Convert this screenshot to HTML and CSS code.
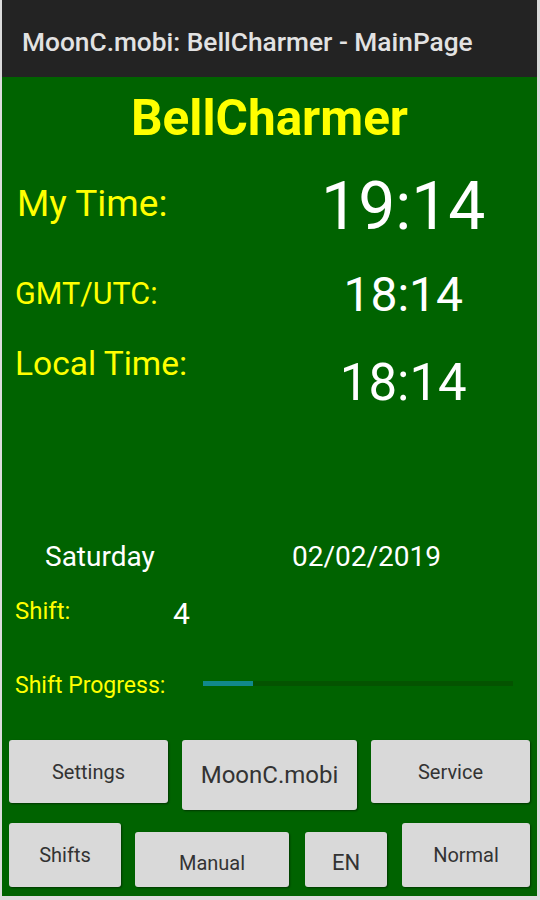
FILE: index.html
```html
<!DOCTYPE html>
<html lang="en">
<head>
    <meta charset="UTF-8">
    <meta name="viewport" content="width=device-width, initial-scale=1.0">
    <title>BellCharmer - MainPage</title>
    <link rel="stylesheet" href="styles.css">
</head>
<body>
  <div class="app">
    <div class="titlebar">MoonC.mobi: BellCharmer - MainPage</div>
    <div class="main">
      <h1 class="app-name">BellCharmer</h1>

      <div class="time-row row-my">
        <span class="label">My Time:</span>
        <span class="value">19:14</span>
      </div>
      <div class="time-row row-gmt">
        <span class="label">GMT/UTC:</span>
        <span class="value">18:14</span>
      </div>
      <div class="time-row row-local">
        <span class="label">Local Time:</span>
        <span class="value">18:14</span>
      </div>

      <div class="date-row">
        <span class="day">Saturday</span>
        <span class="date">02/02/2019</span>
      </div>

      <div class="shift-row">
        <span class="shift-label">Shift:</span>
        <span class="shift-value">4</span>
      </div>

      <div class="progress-row">
        <span class="shift-label">Shift Progress:</span>
        <div class="progress"><div class="progress-fill" style="width: 16%"></div></div>
      </div>

      <div class="buttons buttons-top">
        <button class="btn btn-settings">Settings</button>
        <button class="btn btn-moonc">MoonC.mobi</button>
        <button class="btn btn-service">Service</button>
      </div>
      <div class="buttons buttons-bottom">
        <button class="btn btn-shifts">Shifts</button>
        <button class="btn btn-manual low">Manual</button>
        <button class="btn btn-lang low">EN</button>
        <button class="btn btn-normal">Normal</button>
      </div>
    </div>
  </div>
</body>
</html>
```

FILE: styles.css
```css
/* page frame */
body {
  margin: 0;
  background-color: #dcdcdc;
  font-family: Roboto, "Liberation Sans", sans-serif;
}

.app {
  margin: 0 3px 0 2px;
}

.titlebar {
  height: 69px;
  padding-top: 8px;
  padding-left: 20px;
  background-color: #232323;
  color: #e2e2e2;
  font-size: 26.3px;
  font-weight: 500;
  line-height: 69px;
  white-space: nowrap;
}

.main {
  height: 819px;
  background-color: #006300;
}

.app-name {
  margin: 0;
  padding-top: 0;
  text-align: center;
  font-size: 49.5px;
  font-weight: bold;
  line-height: 83px;
  color: #ffff00;
}

/* time rows */
.time-row {
  display: grid;
  grid-template-columns: 1fr 1fr;
  align-items: start;
}

.label {
  padding-left: 13px;
  color: #ffff00;
}

.value {
  text-align: center;
  color: #ffffff;
}

.row-my {
  margin-top: 6px;
}

.row-my .label { font-size: 37px; line-height: 75px; padding-left: 15px; }
.row-my .value { font-size: 66px; line-height: 81px; }

.row-gmt .label { font-size: 30.5px; line-height: 93px; }
.row-gmt .value { font-size: 48px; line-height: 96px; }

.row-local .label { font-size: 33.5px; line-height: 41px; }
.row-local .value { font-size: 51px; line-height: 80px; }

/* date and shift */
.date-row {
  display: flex;
  margin-top: 107px;
  font-size: 28px;
  line-height: 54px;
  color: #ffffff;
}

.day {
  padding-left: 43px;
  width: 247px;
}

.shift-row {
  display: flex;
  align-items: flex-start;
}

.shift-label {
  padding-left: 13px;
  color: #ffff00;
  font-size: 24px;
  line-height: 54px;
}

.shift-row .shift-label {
  width: 158px;
}

.shift-value {
  color: #ffffff;
  font-size: 30px;
  line-height: 59px;
}

.progress-row {
  display: flex;
  align-items: flex-start;
  height: 97px;
}

.progress-row .shift-label {
  width: 188px;
  font-size: 23px;
  line-height: 86px;
}

.progress {
  width: 310px;
  height: 5px;
  margin-top: 38px;
  background-color: #045300;
}

.progress-fill {
  height: 100%;
  background-color: #11898c;
}

/* buttons */
.buttons {
  display: flex;
  align-items: flex-start;
  padding-left: 7px;
}

.buttons-bottom {
  margin-top: 13px;
}

.btn {
  padding: 0;
  border: none;
  border-radius: 3px;
  background-color: #d9d9d9;
  color: #333333;
  font-family: Roboto, "Liberation Sans", sans-serif;
  font-size: 20px;
  box-shadow: 1px 1px 2px rgba(0, 0, 0, 0.45);
  cursor: pointer;
}

.btn-settings { width: 159px; height: 63px; }
.btn-moonc { width: 175px; height: 70px; margin-left: 14px; font-size: 24px; }
.btn-service { width: 159px; height: 63px; margin-left: 14px; }

.btn-shifts { width: 112px; height: 64px; }
.btn-manual { width: 154px; height: 55px; margin-top: 9px; margin-left: 14px; }
.btn-lang { width: 82px; height: 55px; margin-top: 9px; margin-left: 16px; font-size: 22px; }
.btn-normal { width: 128px; height: 64px; margin-left: 15px; }

.btn.low {
  padding-top: 6px;
}
```
